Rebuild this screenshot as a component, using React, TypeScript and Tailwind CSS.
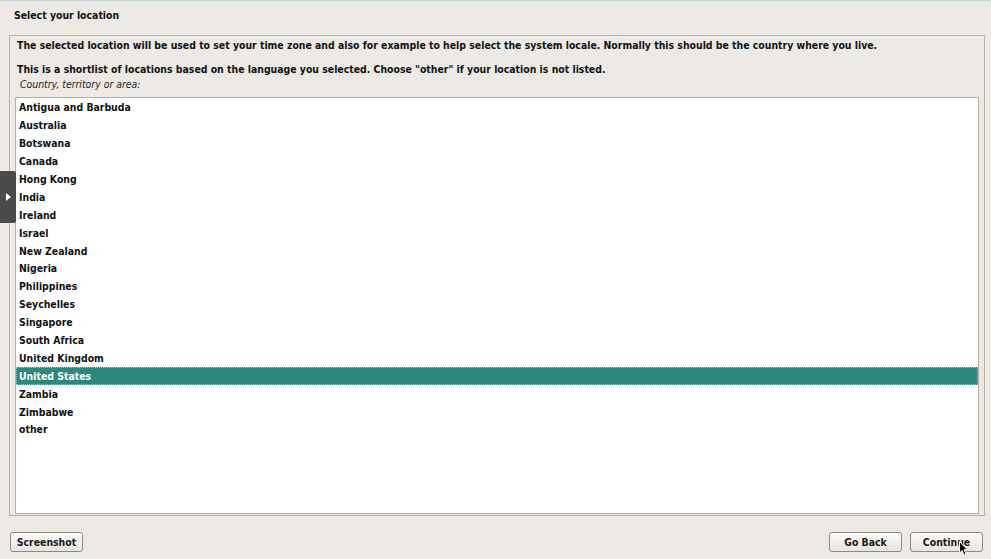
const locations = [
  "Antigua and Barbuda",
  "Australia",
  "Botswana",
  "Canada",
  "Hong Kong",
  "India",
  "Ireland",
  "Israel",
  "New Zealand",
  "Nigeria",
  "Philippines",
  "Seychelles",
  "Singapore",
  "South Africa",
  "United Kingdom",
  "United States",
  "Zambia",
  "Zimbabwe",
  "other",
];

const selected = "United States";

function InstallerButton({ label }: { label: string }) {
  return (
    <button className="h-[20px] w-[73px] rounded-[3px] border border-[#8f887c] bg-gradient-to-b from-[#fbfaf8] to-[#e9e5df] text-[10.4px] font-bold text-[#1a1a1a] shadow-[inset_0_1px_0_#ffffff]">
      {label}
    </button>
  );
}

export default function App() {
  return (
    <div className="relative flex h-[559px] w-[991px] flex-col overflow-hidden border-t border-[#c7d3cf] bg-[#edeae5] font-['DejaVu_Sans_Condensed','DejaVu_Sans',sans-serif] text-[10.4px] leading-[15px] text-[#111]">
      <div className="h-[34px] pl-[14px] pt-[7px] font-bold">Select your location</div>

      <div className="ml-[9px] mr-[6px] flex h-[481px] flex-col border border-[#b8b0a2]">
        <p className="pl-[7px] pt-[2px] font-bold">
          The selected location will be used to set your time zone and also for example to help select the system locale. Normally this should be the country where you live.
        </p>
        <p className="pl-[7px] pt-[9px] font-bold">
          This is a shortlist of locations based on the language you selected. Choose "other" if your location is not listed.
        </p>
        <p className="pl-[10px] italic text-[#222]">Country, territory or area:</p>

        <div className="ml-[5px] mr-[5px] mt-[5px] flex h-[417px] flex-col border border-[#b8b0a2] bg-white pt-[1px]">
          {locations.map((name) =>
            name === selected ? (
              <div
                key={name}
                className="flex h-[17.9px] items-center border border-dotted border-[#8fcabf] bg-[#2c887d] pl-[2px] font-bold text-white"
              >
                {name}
              </div>
            ) : (
              <div key={name} className="flex h-[17.9px] items-center pl-[3px] font-bold">
                {name}
              </div>
            )
          )}
        </div>
      </div>

      <div className="mt-[16px] flex items-center pl-[10px] pr-[8px]">
        <InstallerButton label="Screenshot" />
        <div className="flex-1" />
        <div className="flex gap-[8px]">
          <InstallerButton label="Go Back" />
          <InstallerButton label="Continue" />
        </div>
      </div>

      {/* collapsed side panel handle */}
      <div className="absolute left-0 top-[170px] flex h-[52px] w-[16px] items-center justify-center rounded-r-[2px] bg-[#4a4a49]">
        <svg width="5" height="8" viewBox="0 0 5 8">
          <path d="M0 0 L5 4 L0 8 Z" fill="#ffffff" />
        </svg>
      </div>

      {/* mouse pointer */}
      <svg className="absolute left-[959px] top-[540px]" width="10" height="15" viewBox="0 0 10 15">
        <path d="M0.5 0.5 L0.5 12 L3 9.5 L5 14 L7 13 L5 8.8 L8.5 8.8 Z" fill="#000" stroke="#fff" strokeWidth="1" />
      </svg>
    </div>
  );
}
